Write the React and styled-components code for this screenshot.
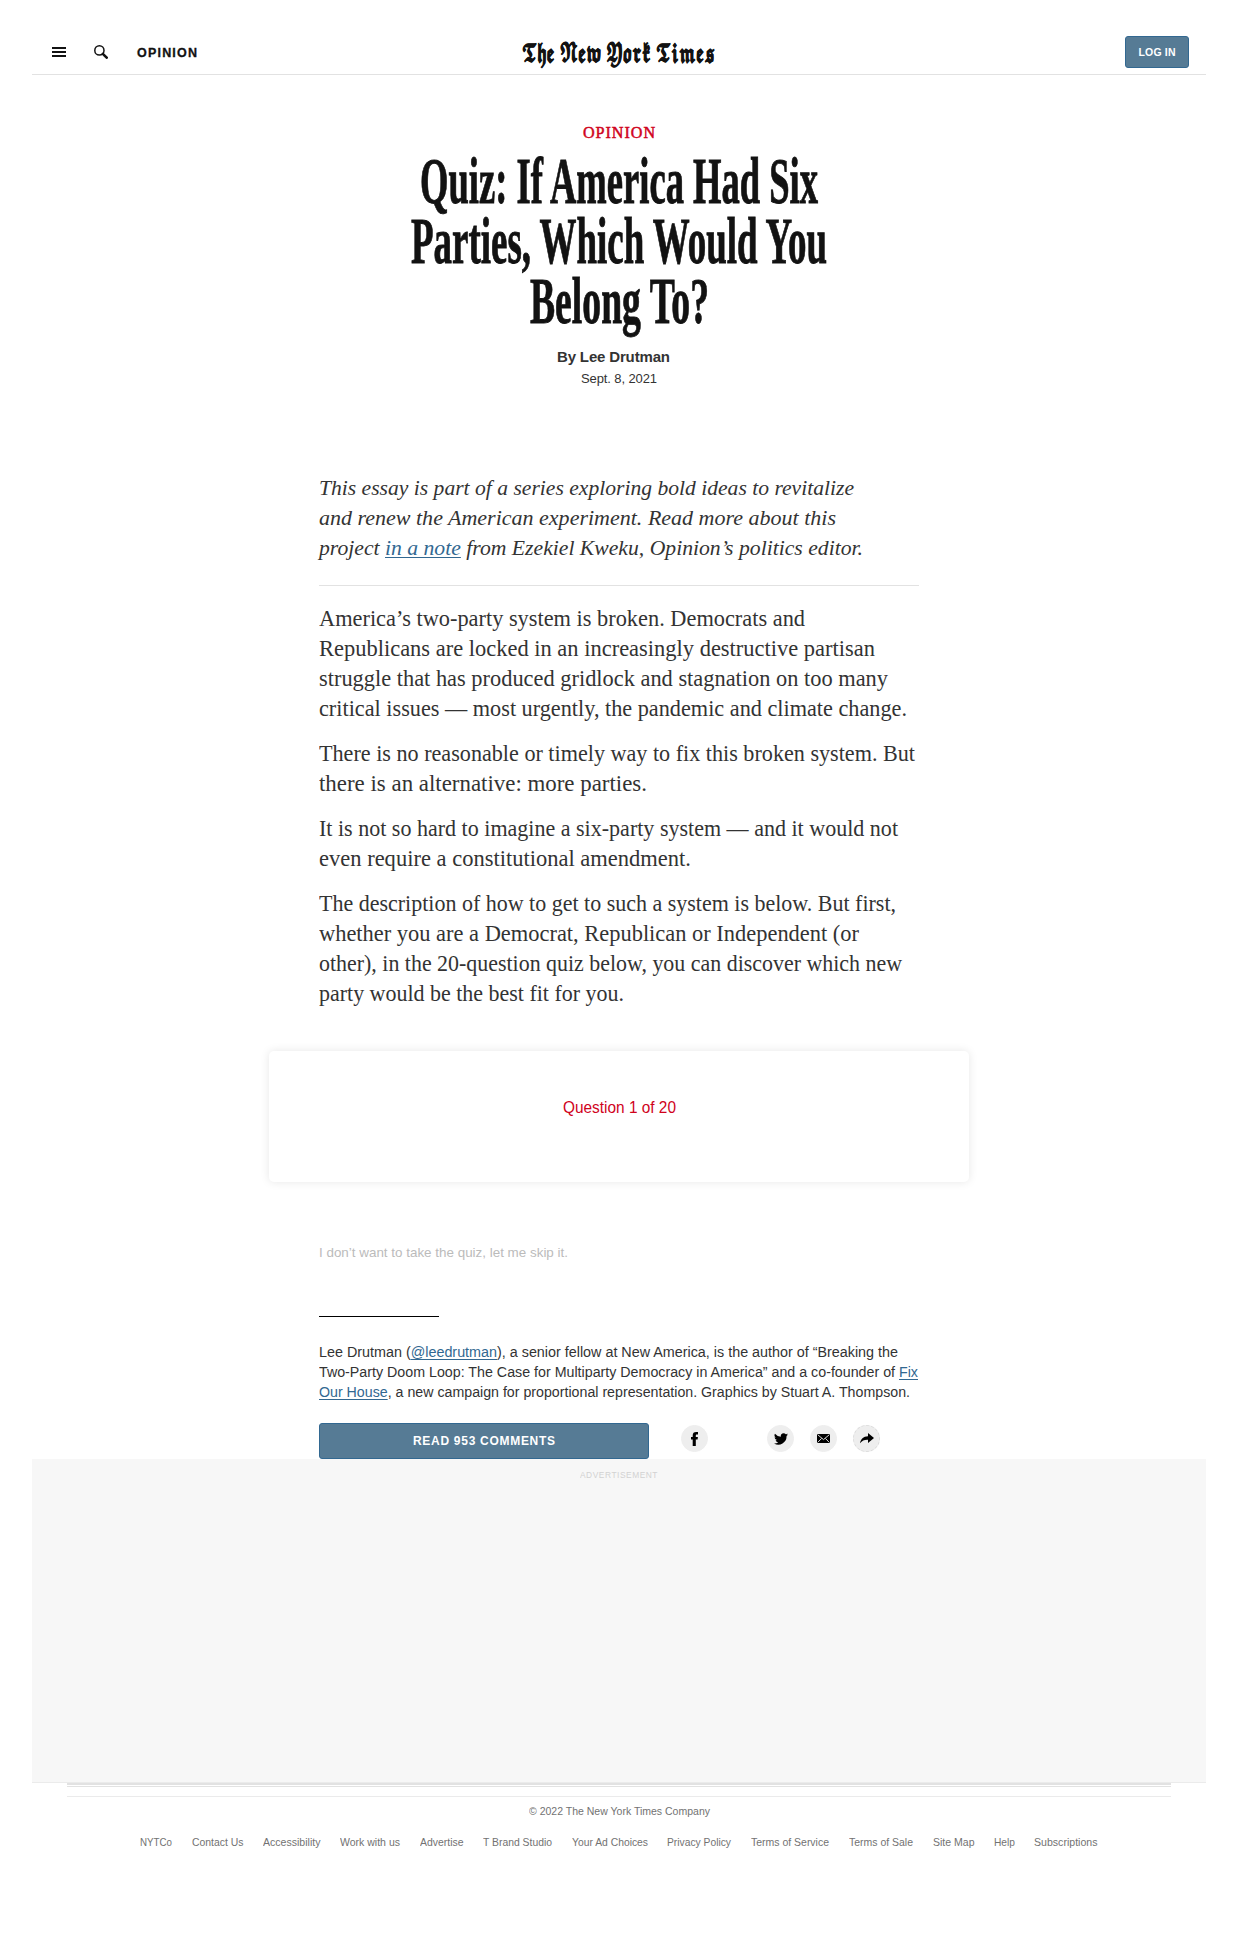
import React, { useLayoutEffect, useRef } from 'react';
import styled, { createGlobalStyle } from 'styled-components';

const serif = '"Liberation Serif", "Times New Roman", serif';
const sans = '"Liberation Sans", Arial, sans-serif';

const Global = createGlobalStyle`
  *, *::before, *::after { box-sizing: border-box; }
  body { margin: 0; background: #fff; color: #333; font-family: ${sans}; }
  p, h1, ul { margin: 0; padding: 0; font-weight: inherit; }
`;

const Measure = styled.span`
  display: inline-block;
  vertical-align: top;
  width: ${(p) => p.$w}px;
  white-space: nowrap;
  text-align: left;
`;
const Run = styled.span`
  display: inline-block;
  vertical-align: top;
  transform-origin: 0 50%;
`;

/* Sets one line of type to a fixed measure, by tracking or by condensing. */
function Fit({ w, condense, children }) {
  const ref = useRef(null);
  useLayoutEffect(() => {
    const el = ref.current;
    el.style.letterSpacing = '';
    el.style.transform = 'none';
    const natural = el.getBoundingClientRect().width;
    if (condense) el.style.transform = `scaleX(${w / natural})`;
    else el.style.letterSpacing = `${(w - natural) / (Array.from(el.textContent).length - 1)}px`;
  }, [w, condense]);
  return (
    <Measure $w={w}>
      <Run ref={ref}>{children}</Run>
    </Measure>
  );
}

const Page = styled.div`
  display: flex;
  flex-direction: column;
  min-height: 1940px;
  overflow: hidden;
`;
const Masthead = styled.header`
  display: grid;
  grid-template-columns: 1fr auto 1fr;
  align-items: center;
  height: 75px;
  margin: 0 32px;
  padding: 30px 17px 0 20px;
  border-bottom: 1px solid #e2e2e2;
`;
const Tools = styled.div`
  display: flex;
  align-items: center;
  gap: 28px;
`;
const Burger = styled.span`
  display: flex;
  flex-direction: column;
  gap: 2px;
  i { width: 14px; height: 2px; background: #121212; }
`;
const Section = styled.a`
  margin: 1px 0 0 1px;
  color: #121212;
  font: 700 12.5px/16px ${sans};
  -webkit-text-stroke: 0.3px #121212;
`;
const Logo = styled.a`
  margin: 4px 4px 0 0;
  color: #121212;
  font: 700 24px/30px "DejaVu Serif", "DejaVu Math TeX Gyre", "DejaVu Sans", serif;
  -webkit-text-stroke: 0.6px #121212;
`;
const LogIn = styled.button`
  justify-self: end;
  width: 64px;
  height: 32px;
  padding: 0;
  border: 1px solid #326891;
  border-radius: 3px;
  background: #567b95;
  color: #fff;
  font: 700 10.5px/30px ${sans};
`;
const Heading = styled.div`
  display: flex;
  flex-direction: column;
  align-items: center;
  padding-top: 47px;
`;
const Kicker = styled.div`
  color: #d0021b;
  font: 400 17px/21px ${serif};
  letter-spacing: 1px;
  -webkit-text-stroke: 0.5px #d0021b;
`;
const Title = styled.h1`
  display: flex;
  flex-direction: column;
  align-items: center;
  margin-top: 8px;
  color: #121212;
  font: 700 65px/60px ${serif};
  -webkit-text-stroke: 0.9px #121212;
`;
const Byline = styled.div`
  margin: 16px 11px 0 0;
  font: 700 15px/20px ${sans};
`;
const Dateline = styled.time`
  margin-top: 3px;
  font: 400 13px/18px ${sans};
`;
const Column = styled.section`
  display: flex;
  flex-direction: column;
  width: 600px;
  margin: ${(p) => p.$top || 0}px auto 0;
`;
const Intro = styled.p`
  padding-bottom: 22px;
  border-bottom: 1px solid #e2e2e2;
  font: italic 400 22px/30px ${serif};
`;
const Story = styled.div`
  display: flex;
  flex-direction: column;
  gap: 15px;
  margin-top: 18px;
`;
const Paragraph = styled.p`
  display: flex;
  flex-direction: column;
  font: 400 23px/30px ${serif};
`;
const Link = styled.a`
  color: #326891;
  text-decoration: underline;
  text-decoration-thickness: 1px;
  text-underline-offset: 2px;
`;
const Quiz = styled.section`
  width: 700px;
  height: 131px;
  margin: 42px auto 0;
  padding-top: 47px;
  border-radius: 5px;
  box-shadow: 0 0 10px rgba(0, 0, 0, 0.1);
  color: #d0021b;
  font: 400 16px/20px ${sans};
  text-align: center;
`;
const Skip = styled.a`
  color: #bbb;
  font: 400 13.5px/18px ${sans};
`;
const ShortRule = styled.div`
  width: 120px;
  height: 1px;
  margin: 54px 0 25px;
  background: #000;
`;
const Bio = styled.p`
  display: flex;
  flex-direction: column;
  font: 400 15.5px/20px ${sans};
`;
const Actions = styled.div`
  display: flex;
  align-items: flex-start;
  margin-top: 21px;
`;
const Comments = styled.button`
  width: 330px;
  height: 36px;
  margin-right: 32px;
  padding: 0;
  border: 1px solid #326891;
  border-radius: 3px;
  background: #567b95;
  color: #fff;
  font: 700 12px/32px ${sans};
`;
const Share = styled.a`
  display: grid;
  place-items: center;
  width: 27px;
  height: 27px;
  margin: 2px ${(p) => p.$after || 16}px 0 0;
  border: 1px ${(p) => (p.$dashed ? 'dashed #dcdcdc' : 'solid #eee')};
  border-radius: 50%;
  background: #eee;
`;
const Advert = styled.aside`
  height: 324px;
  margin: 0 32px;
  padding-top: 9px;
  background: #f7f7f7;
  border-bottom: 1px solid #ebebeb;
  color: #d2d2d2;
  font: 400 9.5px/14px ${sans};
  letter-spacing: 0.6px;
  text-align: center;
`;
const Footer = styled.footer`
  display: flex;
  flex-direction: column;
  align-items: center;
  margin: 0 67px;
  color: #727272;
  font: 400 11.5px/16px ${sans};
`;
const DoubleRule = styled.div`
  width: 100%;
  height: 4px;
  border-top: 2px solid #e2e2e2;
  border-bottom: 1px solid #e2e2e2;
`;
const Copyright = styled.div`
  display: flex;
  justify-content: center;
  width: 100%;
  margin-top: 9px;
  padding-top: 6px;
  border-top: 1px solid #ebebeb;
`;
const FooterNav = styled.nav`
  display: flex;
  gap: 19.7px;
  margin-top: 15px;
`;

const story = [
  [
    ['America’s two-party system is broken. Democrats and', 486],
    ['Republicans are locked in an increasingly destructive partisan', 556],
    ['struggle that has produced gridlock and stagnation on too many', 569],
    ['critical issues — most urgently, the pandemic and climate change.', 588],
  ],
  [
    ['There is no reasonable or timely way to fix this broken system. But', 596],
    ['there is an alternative: more parties.', 328],
  ],
  [
    ['It is not so hard to imagine a six-party system — and it would not', 579],
    ['even require a constitutional amendment.', 372],
  ],
  [
    ['The description of how to get to such a system is below. But first,', 577],
    ['whether you are a Democrat, Republican or Independent (or', 540],
    ['other), in the 20-question quiz below, you can discover which new', 583],
    ['party would be the best fit for you.', 305],
  ],
];

const footerLinks = [
  ['NYTCo', 32], ['Contact Us', 51.5], ['Accessibility', 57.5], ['Work with us', 60],
  ['Advertise', 43.5], ['T Brand Studio', 69], ['Your Ad Choices', 76],
  ['Privacy Policy', 64], ['Terms of Service', 78], ['Terms of Sale', 64],
  ['Site Map', 41.5], ['Help', 21], ['Subscriptions', 63.5],
];

export default function App() {
  return (
    <Page>
      <Global />
      <Masthead>
        <Tools>
          <Burger><i /><i /><i /></Burger>
          <svg width="14" height="14" viewBox="0 0 14 14" fill="none" stroke="#121212">
            <circle cx="5.4" cy="5.4" r="4.6" strokeWidth="1.5" />
            <path d="M8.8 8.8L12.7 12.7" strokeWidth="2.6" strokeLinecap="round" />
          </svg>
          <Section><Fit w={60}>OPINION</Fit></Section>
        </Tools>
        <Logo aria-label="The New York Times"><Fit w={193} condense>𝕿𝖍𝖊 𝕹𝖊𝖜 𝖄𝖔𝖗𝖐 𝕿𝖎𝖒𝖊𝖘</Fit></Logo>
        <LogIn><Fit w={37}>LOG IN</Fit></LogIn>
      </Masthead>

      <Heading>
        <Kicker><Fit w={73} condense>OPINION</Fit></Kicker>
        <Title>
          <Fit w={398} condense>Quiz: If America Had Six</Fit>
          <Fit w={416} condense>Parties, Which Would You</Fit>
          <Fit w={179} condense>Belong To?</Fit>
        </Title>
        <Byline><Fit w={113}>By Lee Drutman</Fit></Byline>
        <Dateline><Fit w={76}>Sept. 8, 2021</Fit></Dateline>
      </Heading>

      <Column $top={85}>
        <Intro>
          <Fit w={535} condense>This essay is part of a series exploring bold ideas to revitalize</Fit>
          <Fit w={517} condense>and renew the American experiment. Read more about this</Fit>
          <Fit w={544} condense>project <Link>in a note</Link> from Ezekiel Kweku, Opinion’s politics editor.</Fit>
        </Intro>
        <Story>
          {story.map((lines) => (
            <Paragraph key={lines[0][0]}>
              {lines.map(([text, w]) => <Fit key={text} w={w} condense>{text}</Fit>)}
            </Paragraph>
          ))}
        </Story>
      </Column>

      <Quiz><Fit w={113} condense>Question 1 of 20</Fit></Quiz>

      <Column $top={62}>
        <Skip><Fit w={249} condense>I don’t want to take the quiz, let me skip it.</Fit></Skip>
        <ShortRule />
        <Bio>
          <Fit w={579} condense>Lee Drutman (<Link>@leedrutman</Link>), a senior fellow at New America, is the author of “Breaking the</Fit>
          <Fit w={599} condense>Two-Party Doom Loop: The Case for Multiparty Democracy in America” and a co-founder of <Link>Fix</Link></Fit>
          <Fit w={591} condense><Link>Our House</Link>, a new campaign for proportional representation. Graphics by Stuart A. Thompson.</Fit>
        </Bio>
        <Actions>
          <Comments><Fit w={142}>READ 953 COMMENTS</Fit></Comments>
          <Share $after={59}>
            <svg width="7" height="14" viewBox="0 0 7 14">
              <path d="M1.700 14V7.600H0V5.100h1.700V3.400C1.700 1.200 2.900 0 5.200 0H7v2.600H5.900c-.8 0-1.100.4-1.100 1.100v1.400h2.100l-.3 2.500H4.800V14z" />
            </svg>
          </Share>
          <Share>
            <svg width="14" height="12" viewBox="0 0 24 20">
              <path d="M24 2.400a10 10 0 0 1-2.800.8A5 5 0 0 0 23.300.5a10 10 0 0 1-3.100 1.200 4.900 4.900 0 0 0-8.400 4.500A14 14 0 0 1 1.700 1a4.900 4.900 0 0 0 1.500 6.600 5 5 0 0 1-2.200-.6 4.900 4.900 0 0 0 4 4.900 5 5 0 0 1-2.300.1 4.900 4.900 0 0 0 4.600 3.400A10 10 0 0 1 0 17.500 14 14 0 0 0 21.500 5 10 10 0 0 0 24 2.400z" />
            </svg>
          </Share>
          <Share>
            <svg width="13" height="9" viewBox="0 0 13 9">
              <rect width="13" height="9" rx="1" />
              <path d="M.8.8L6.500 5.600 12.200.8M.8 8.300L4.600 4.400M12.200 8.300L8.400 4.400" fill="none" stroke="#eee" strokeWidth=".9" />
            </svg>
          </Share>
          <Share $dashed>
            <svg width="14" height="11" viewBox="0 0 14 11">
              <path d="M0 10.300C.7 6 3.300 3.600 8 3.300V0l6 5.100-6 4.900V6.800C4.500 6.600 2.200 7.600 0 10.300z" />
            </svg>
          </Share>
        </Actions>
      </Column>

      <Advert><Fit w={78} condense>ADVERTISEMENT</Fit></Advert>
      <Footer>
        <DoubleRule />
        <Copyright><Fit w={181} condense>© 2022 The New York Times Company</Fit></Copyright>
        <FooterNav>
          {footerLinks.map(([label, w]) => <Fit key={label} w={w} condense>{label}</Fit>)}
        </FooterNav>
      </Footer>
    </Page>
  );
}
